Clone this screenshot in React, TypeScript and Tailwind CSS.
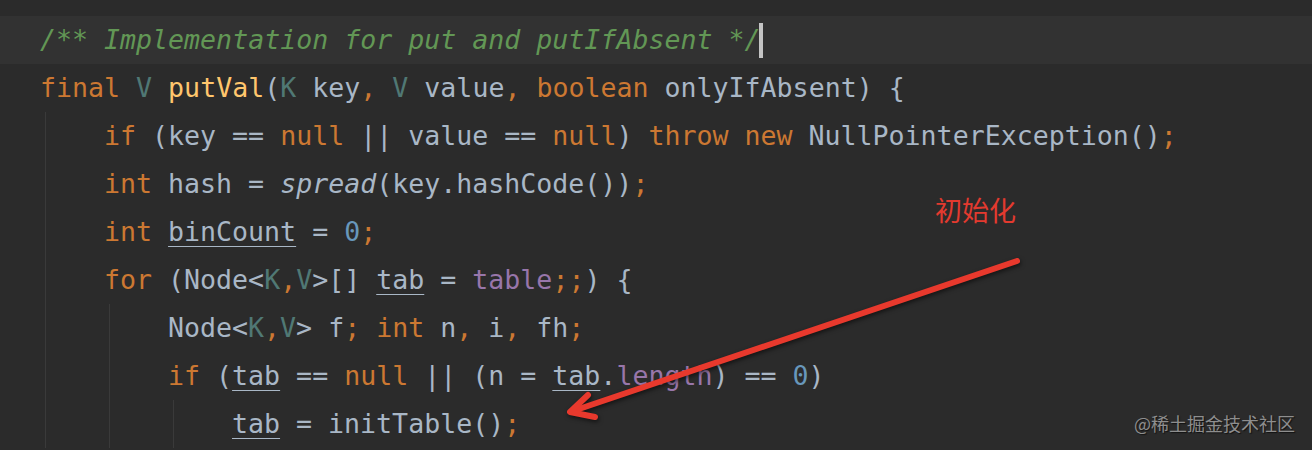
import React from "react";

type Tok = [string, string];

const D = "text-[#a9b7c6]";
const KW = "text-[#cc7832]";
const TP = "text-[#507874]";
const FN = "text-[#ffc66d]";
const NUM = "text-[#6897bb]";
const FLD = "text-[#9876aa]";
const UL = "text-[#a9b7c6] underline decoration-[#a9b7c6] decoration-1 underline-offset-[5px]";
const IT = "text-[#a9b7c6] italic";

function Line({ toks, children }: { toks: Tok[]; children?: React.ReactNode }) {
  return (
    <div className="h-[48px] flex items-center whitespace-pre">
      {toks.map((t, i) => (
        <span key={i} className={t[1]}>
          {t[0]}
        </span>
      ))}
      {children}
    </div>
  );
}

export default function App() {
  return (
    <div
      className="relative w-full h-[450px] overflow-hidden bg-[#2b2b2b] text-[26.6px] leading-[48px]"
      style={{ fontFamily: '"DejaVu Sans Mono", "Liberation Mono", monospace' }}
    >
      <div className="h-[16px]" />
      <div className="bg-[#323232] pl-[40px]">
        <Line toks={[["/** Implementation for put and putIfAbsent */", "text-[#629755] italic"]]}>
          <span className="inline-block w-[4px] h-[35px] bg-[#c4c4c4] ml-[-2px]" />
        </Line>
      </div>
      <div className="pl-[40px]">
        <Line
          toks={[
            ["final ", KW],
            ["V ", TP],
            ["putVal", FN],
            ["(", D],
            ["K ", TP],
            ["key", D],
            [", ", KW],
            ["V ", TP],
            ["value", D],
            [", ", KW],
            ["boolean ", KW],
            ["onlyIfAbsent) {", D],
          ]}
        />
        <div className="ml-[5px] border-l border-[#3a3a3a] pl-[58px]">
          <Line
            toks={[
              ["if ", KW],
              ["(key == ", D],
              ["null ", KW],
              ["|| value == ", D],
              ["null", KW],
              [") ", D],
              ["throw new ", KW],
              ["NullPointerException()", D],
              [";", KW],
            ]}
          />
          <Line
            toks={[
              ["int ", KW],
              ["hash = ", D],
              ["spread", IT],
              ["(key.hashCode())", D],
              [";", KW],
            ]}
          />
          <Line
            toks={[
              ["int ", KW],
              ["binCount", UL],
              [" = ", D],
              ["0", NUM],
              [";", KW],
            ]}
          />
          <Line
            toks={[
              ["for ", KW],
              ["(Node<", D],
              ["K", TP],
              [",", KW],
              ["V", TP],
              [">[] ", D],
              ["tab", UL],
              [" = ", D],
              ["table", FLD],
              [";;", KW],
              [") {", D],
            ]}
          />
          <div className="ml-[5px] border-l border-[#3a3a3a] pl-[58px]">
            <Line
              toks={[
                ["Node<", D],
                ["K", TP],
                [",", KW],
                ["V", TP],
                ["> f", D],
                ["; ", KW],
                ["int ", KW],
                ["n", D],
                [", ", KW],
                ["i", D],
                [", ", KW],
                ["fh", D],
                [";", KW],
              ]}
            />
            <Line
              toks={[
                ["if ", KW],
                ["(", D],
                ["tab", UL],
                [" == ", D],
                ["null ", KW],
                ["|| (n = ", D],
                ["tab", UL],
                [".", D],
                ["length", FLD],
                [") == ", D],
                ["0", NUM],
                [")", D],
              ]}
            />
            <div className="ml-[5px] border-l border-[#3a3a3a] pl-[58px]">
              <Line
                toks={[
                  ["tab", UL],
                  [" = initTable()", D],
                  [";", KW],
                ]}
              />
            </div>
          </div>
        </div>
      </div>

      <div
        className="absolute left-[935px] top-[190px] text-[27px] leading-[40px] text-[#e33a2f]"
        style={{ fontFamily: '"Noto Sans CJK SC", "Noto Sans", sans-serif' }}
      >
        初始化
      </div>

      <svg
        className="absolute inset-0 pointer-events-none"
        width="1312"
        height="450"
        viewBox="0 0 1312 450"
        style={{ filter: "drop-shadow(1px 2px 2px rgba(0,0,0,0.55))" }}
      >
        <g stroke="#e8392d" strokeWidth="6" strokeLinecap="round" strokeLinejoin="round" fill="none">
          <line x1="1017" y1="261" x2="573" y2="411" />
          <polyline points="588,395 570,412 595,417" />
        </g>
      </svg>

      <div
        className="absolute right-[17px] top-[410px] text-[18px] leading-[26px] text-[#8e8e8e]"
        style={{
          fontFamily: '"Noto Sans CJK SC", "Noto Sans", sans-serif',
          textShadow: "1px 1px 1px rgba(0,0,0,0.6)",
        }}
      >
        @稀土掘金技术社区
      </div>
    </div>
  );
}
